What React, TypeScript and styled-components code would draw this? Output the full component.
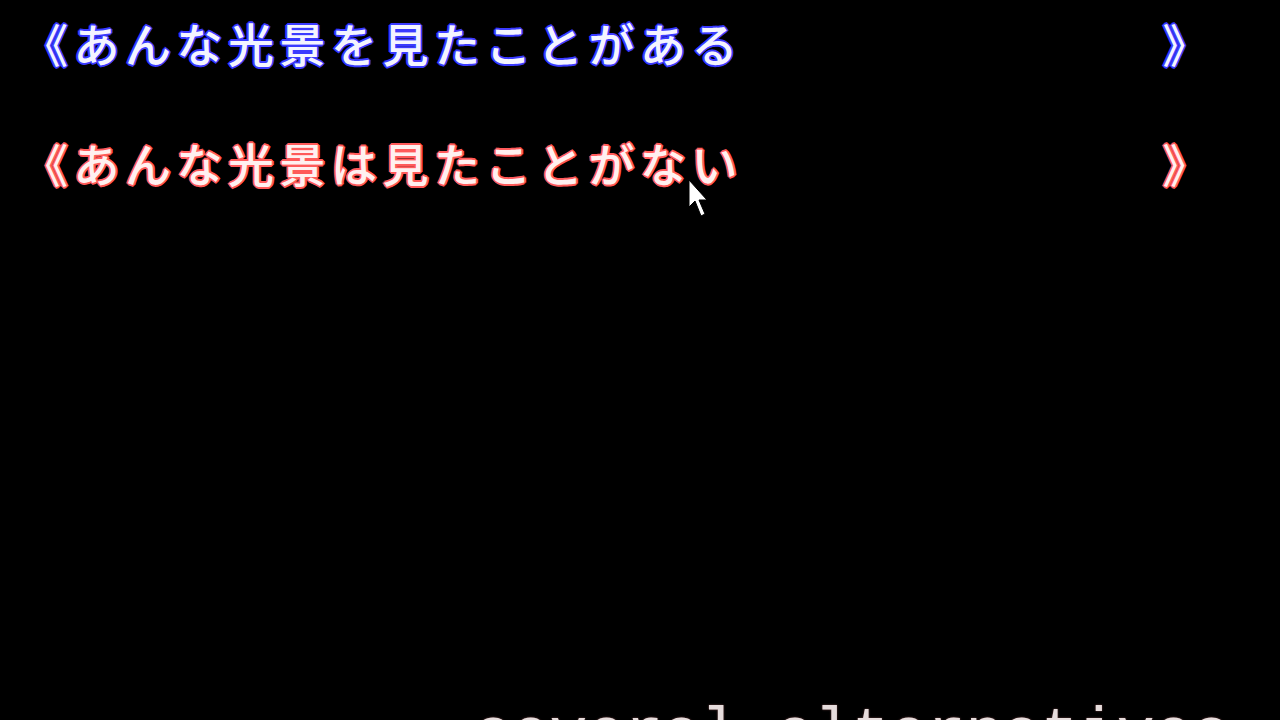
import React from 'react';
import styled, { createGlobalStyle } from 'styled-components';

const GlobalStyle = createGlobalStyle`
  html, body {
    margin: 0;
    padding: 0;
    background: #000;
  }
`;

const Screen = styled.main`
  position: relative;
  width: 1280px;
  height: 720px;
  overflow: hidden;
  background: #000;
  display: flex;
  flex-direction: column;
  padding: 12px 66px 0 22px;
  box-sizing: border-box;
  gap: 60px;
`;

const Choice = styled.div<{ $glow: string; $core: string }>`
  display: flex;
  justify-content: space-between;
  align-items: center;
  height: 60px;

  font-family: 'Noto Sans CJK JP', 'Noto Sans', sans-serif;
  font-weight: 500;
  font-size: 46px;
  line-height: 60px;
  letter-spacing: 5.5px;
  color: ${(p) => p.$core};
  text-shadow:
    2px 0 0 ${(p) => p.$glow},
    -2px 0 0 ${(p) => p.$glow},
    0 2px 0 ${(p) => p.$glow},
    0 -2px 0 ${(p) => p.$glow},
    1px 1px 0 ${(p) => p.$glow},
    -1px -1px 0 ${(p) => p.$glow},
    1px -1px 0 ${(p) => p.$glow},
    -1px 1px 0 ${(p) => p.$glow};
`;

const Caption = styled.div`
  margin-top: auto;
  margin-bottom: -50px;
  padding-left: 452px;
  font-family: 'Liberation Mono', monospace;
  font-size: 63px;
  line-height: 70px;
  color: #e6dcdc;
  white-space: nowrap;
  text-shadow: 0 0 2px #7a4a4a;
`;

const Pointer = styled.svg`
  position: absolute;
  left: 688px;
  top: 179px;
  width: 26px;
  height: 42px;
`;

const lines = [
  { text: '《あんな光景を見たことがある', glow: '#3a3aff', core: '#f4f4ff' },
  { text: '《あんな光景は見たことがない', glow: '#ff5a5a', core: '#fff0f0' },
];

export default function App() {
  return (
    <>
      <GlobalStyle />
      <Screen>
        {lines.map((l) => (
          <Choice key={l.text} $glow={l.glow} $core={l.core}>
            <span>{l.text}</span>
            <span>》</span>
          </Choice>
        ))}
        <Caption>several alternatives</Caption>
        <Pointer viewBox="0 0 26 42">
          <path
            d="M1 1 L1 28 L7 22 L13 37 L17 35 L11 21 L19 21 Z"
            fill="#fff"
            stroke="#000"
            strokeWidth="1"
          />
        </Pointer>
      </Screen>
    </>
  );
}
